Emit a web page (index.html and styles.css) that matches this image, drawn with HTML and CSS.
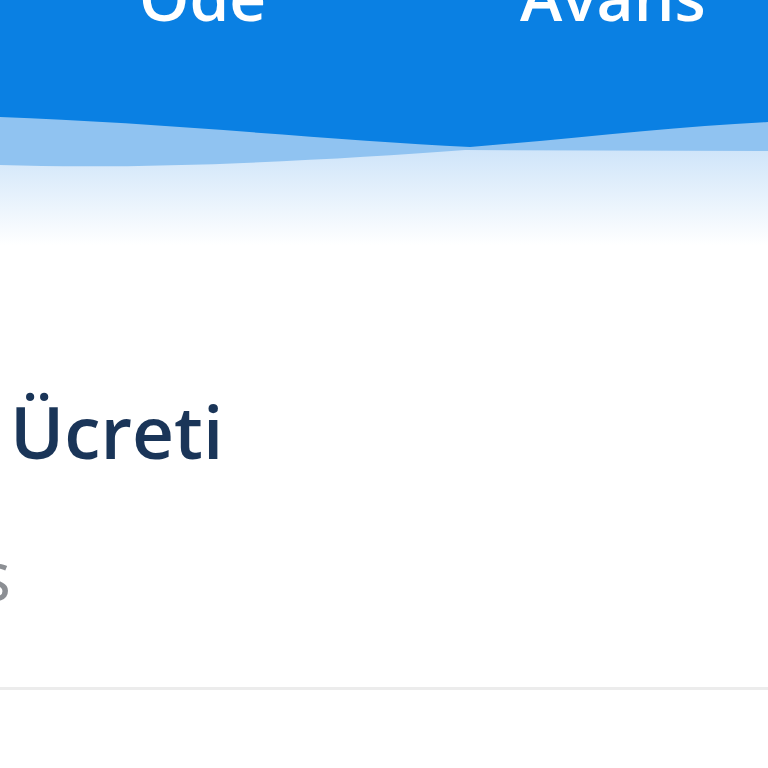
FILE: index.html
```html
<!DOCTYPE html>
<html lang="tr">
<head>
    <meta charset="UTF-8">
    <meta name="viewport" content="width=device-width, initial-scale=1.0">
    <title>Öde / Avans</title>
    <link rel="stylesheet" href="styles.css">
</head>
<body>
    <!-- Top bar with tabs and wave -->
    <div class="hero">
        <div class="tabs">
            <span class="tab tab-pay">Öde</span>
            <span class="tab tab-advance">Avans</span>
        </div>
        <svg class="wave" width="768" height="145" viewBox="0 0 768 145" preserveAspectRatio="none">
            <defs>
                <linearGradient id="fade" x1="0" y1="0" x2="0" y2="1">
                    <stop offset="0.3" stop-color="#cce3f9"/>
                    <stop offset="1" stop-color="#ffffff"/>
                </linearGradient>
            </defs>
            <rect x="0" y="0" width="768" height="145" fill="url(#fade)"/>
            <path d="M0,0 H768 V51 L465,50 C330,60 150,70 0,65 Z" fill="#90c3f1"/>
            <path d="M0,0 H768 V22 C680,26 580,38 470,47 C330,40 150,22 0,17 Z" fill="#0a80e3"/>
        </svg>
    </div>

    <!-- Fee block -->
    <div class="fee">
        <h2 class="fee-title">Ücreti</h2>
        <div class="fee-note"><span>Ücretsiz Avans</span></div>
    </div>

    <div class="divider"></div>
</body>
</html>
```

FILE: styles.css
```css
body {
    margin: 0;
    width: 768px;
    height: 768px;
    overflow: hidden;
    background-color: #fff;
    font-family: "Open Sans", "Noto Sans", sans-serif;
}
.hero {
    background-color: #0a80e3;
}
.tabs {
    display: flex;
    align-items: flex-start;
    height: 100px;
    overflow: hidden;
    padding-left: 139px;
}
.tab {
    margin-top: -35px;
    font-size: 64px;
    line-height: 64px;
    font-weight: 600;
    color: #fff;
}
.tab-advance {
    margin-left: 254px;
}
.wave {
    display: block;
    background-color: #fff;
}
.fee {
    padding-top: 149px;
}
.fee-title {
    margin: 0;
    padding-left: 10px;
    font-size: 73px;
    line-height: 73px;
    font-weight: 600;
    color: #1a3558;
}
.fee-note {
    display: flex;
    justify-content: flex-end;
    width: 11px;
    margin-top: 72px;
    white-space: nowrap;
    font-size: 70px;
    line-height: 70px;
    color: #8c8f94;
}
.divider {
    margin-top: 78px;
    border-top: 3px solid #ececec;
}
```
